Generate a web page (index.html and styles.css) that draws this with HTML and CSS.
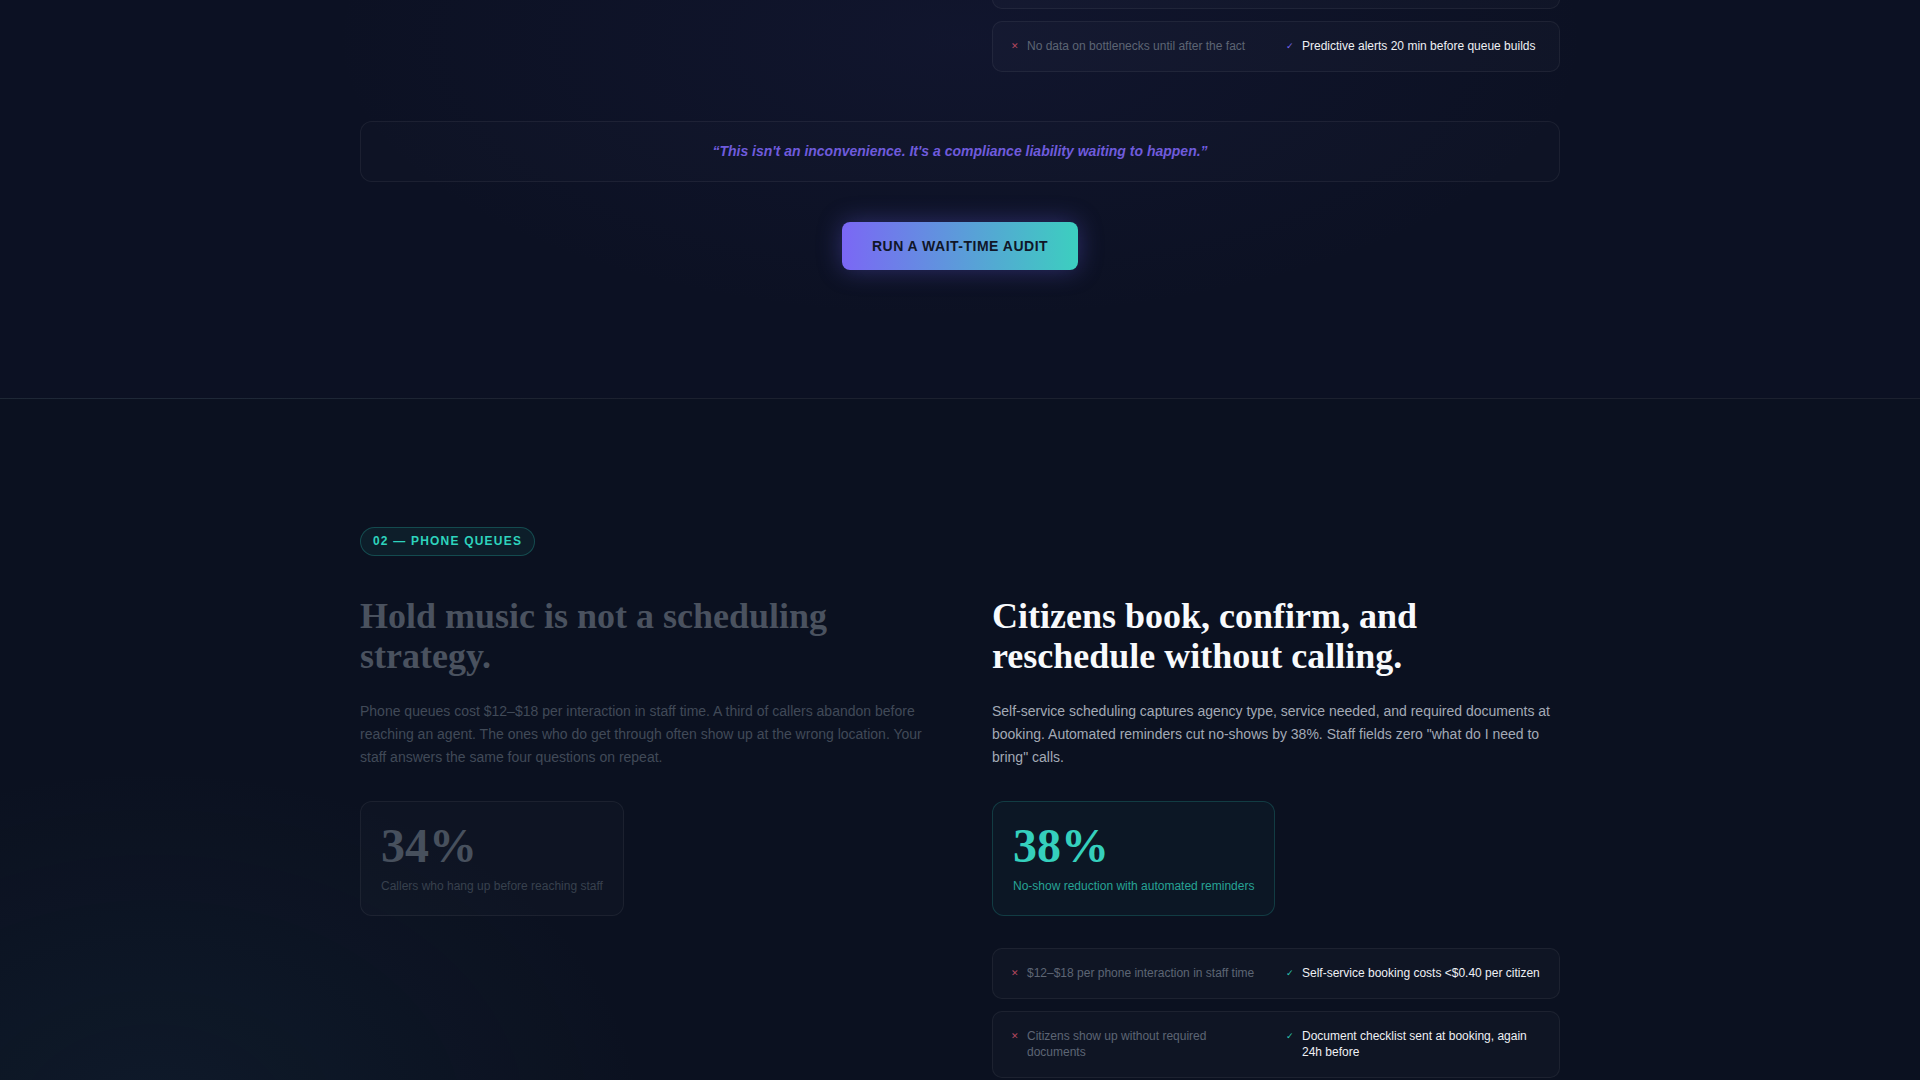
FILE: index.html
```html
<!DOCTYPE html>
<html lang="en">
<head>
    <meta charset="UTF-8">
    <meta name="viewport" content="width=device-width, initial-scale=1.0">
    <title>Appointment Scheduling for Government Agencies</title>
    <link rel="stylesheet" href="styles.css">
</head>
<body>
    <!-- 01: walk-in lines (tail of the section) -->
    <section class="section section-lines">
        <div class="container">
            <div class="split">
                <div class="col before"></div>
                <div class="col after">
                    <div class="compare-list compare-tail">
                        <div class="compare-row">
                            <div class="cell bad"><span class="mark">&#x2715;</span><span>Staff reassigned only after lines form</span></div>
                            <div class="cell good"><span class="mark">&#x2713;</span><span>Staffing matched to booked volume</span></div>
                        </div>
                        <div class="compare-row">
                            <div class="cell bad"><span class="mark">&#x2715;</span><span>No data on bottlenecks until after the fact</span></div>
                            <div class="cell good"><span class="mark">&#x2713;</span><span>Predictive alerts 20 min before queue builds</span></div>
                        </div>
                    </div>
                </div>
            </div>

            <div class="quote">&ldquo;This isn't an inconvenience. It's a compliance liability waiting to happen.&rdquo;</div>

            <div class="cta-wrap">
                <button class="cta-btn">RUN A WAIT-TIME AUDIT</button>
            </div>
        </div>
    </section>

    <!-- 02: phone queues -->
    <section class="section section-phone">
        <div class="container">
            <div class="tag">02 &mdash; PHONE QUEUES</div>

            <div class="split">
                <div class="col before">
                    <h2 class="headline">Hold music is not a scheduling strategy.</h2>
                    <p class="lead">Phone queues cost $12&ndash;$18 per interaction in staff time. A third of callers abandon before reaching an agent. The ones who do get through often show up at the wrong location. Your staff answers the same four questions on repeat.</p>
                    <div class="stat">
                        <div class="stat-num">34%</div>
                        <div class="stat-label">Callers who hang up before reaching staff</div>
                    </div>
                </div>
                <div class="col after">
                    <h2 class="headline">Citizens book, confirm, and reschedule without calling.</h2>
                    <p class="lead">Self-service scheduling captures agency type, service needed, and required documents at booking. Automated reminders cut no-shows by 38%. Staff fields zero "what do I need to bring" calls.</p>
                    <div class="stat">
                        <div class="stat-num">38%</div>
                        <div class="stat-label">No-show reduction with automated reminders</div>
                    </div>

                    <div class="compare-list">
                        <div class="compare-row">
                            <div class="cell bad"><span class="mark">&#x2715;</span><span>$12&ndash;$18 per phone interaction in staff time</span></div>
                            <div class="cell good"><span class="mark">&#x2713;</span><span>Self-service booking costs &lt;$0.40 per citizen</span></div>
                        </div>
                        <div class="compare-row">
                            <div class="cell bad"><span class="mark">&#x2715;</span><span>Citizens show up without required documents</span></div>
                            <div class="cell good"><span class="mark">&#x2713;</span><span>Document checklist sent at booking, again 24h before</span></div>
                        </div>
                    </div>
                </div>
            </div>
        </div>
    </section>
</body>
</html>
```

FILE: styles.css
```css
* {
    margin: 0;
    padding: 0;
    box-sizing: border-box;
}
body {
    font-family: "Liberation Sans", Arial, sans-serif;
    background: #0b1120;
    color: #e5e7eb;
    overflow: hidden;
}

.section {
    position: relative;
}
.section-lines {
    padding-bottom: 128px;
    background:
        radial-gradient(ellipse 900px 400px at 50% 10%, rgba(60, 60, 140, 0.10), transparent 70%),
        #0c1123;
}
.section-phone {
    padding-top: 128px;
    padding-bottom: 80px;
    border-top: 1px solid rgba(255, 255, 255, 0.07);
    background:
        radial-gradient(ellipse 700px 500px at 8% 95%, rgba(40, 90, 110, 0.12), transparent 70%),
        #0b1120;
}

.container {
    width: 1200px;
    margin: 0 auto;
}
.split {
    display: grid;
    grid-template-columns: 1fr 1fr;
    gap: 64px;
}
.col {
    display: flex;
    flex-direction: column;
    align-items: flex-start;
}

/* section label */
.tag {
    display: inline-block;
    padding: 5px 12px;
    border: 1px solid rgba(45, 212, 191, 0.25);
    border-radius: 999px;
    background: rgba(45, 212, 191, 0.07);
    color: #2ed3bd;
    font-size: 12px;
    line-height: 17px;
    font-weight: bold;
    letter-spacing: 1.2px;
    margin-bottom: 40px;
}

.headline {
    font-family: "Liberation Serif", "Times New Roman", serif;
    font-size: 36px;
    line-height: 1.12;
    font-weight: bold;
}
.lead {
    margin-top: 23px;
    font-size: 14px;
    line-height: 1.65;
}
.before .headline { color: #4a525f; }
.before .lead { color: #414a58; }
.after .headline { color: #f8fafc; }
.after .lead { color: #a3aab6; }

/* stat cards */
.stat {
    margin-top: 32px;
    padding: 20px;
    border-radius: 12px;
}
.stat-num {
    font-family: "Liberation Serif", "Times New Roman", serif;
    font-size: 48px;
    line-height: 1;
    font-weight: bold;
}
.stat-label {
    margin-top: 8px;
    font-size: 12px;
    line-height: 17px;
}
.before .stat {
    background: rgba(255, 255, 255, 0.015);
    border: 1px solid rgba(255, 255, 255, 0.06);
}
.before .stat-num { color: #47505d; }
.before .stat-label { color: #38414e; }
.after .stat {
    background: rgba(45, 212, 191, 0.035);
    border: 1px solid rgba(45, 212, 191, 0.2);
}
.after .stat-num { color: #35d0bd; }
.after .stat-label { color: #27a395; }

/* before / after rows */
.compare-list {
    width: 100%;
    margin-top: 32px;
    display: flex;
    flex-direction: column;
    gap: 12px;
}
.compare-tail {
    margin-top: -42px;
}
.compare-row {
    display: grid;
    grid-template-columns: 1fr 1fr;
    gap: 20px;
    padding: 16px 18px;
    background: rgba(255, 255, 255, 0.018);
    border: 1px solid rgba(255, 255, 255, 0.06);
    border-radius: 10px;
    font-size: 12px;
    line-height: 16.5px;
}
.cell {
    display: flex;
    gap: 8px;
}
.mark {
    flex: none;
    width: 8px;
    font-size: 9px;
    line-height: 17px;
}
.bad { color: #5d6574; }
.bad .mark { color: #b3475f; }
.good { color: #eef0f4; }
.section-lines .good .mark { color: #7a68f0; }
.section-phone .good .mark { color: #2ec9b4; }

/* pull quote */
.quote {
    margin-top: 49px;
    padding: 19px 24px;
    border: 1px solid rgba(255, 255, 255, 0.06);
    border-radius: 12px;
    background: rgba(255, 255, 255, 0.012);
    text-align: center;
    font-size: 14px;
    line-height: 21px;
    font-weight: bold;
    font-style: italic;
    color: #6f5bdc;
}

.cta-wrap {
    margin-top: 40px;
    display: flex;
    justify-content: center;
}
.cta-btn {
    padding: 15px 30px;
    border: none;
    border-radius: 8px;
    background: linear-gradient(90deg, #7b67f5, #3ccfbf);
    color: #101628;
    font-family: "Liberation Sans", Arial, sans-serif;
    font-size: 14px;
    line-height: 18px;
    font-weight: bold;
    letter-spacing: 0.5px;
    cursor: pointer;
    box-shadow: 0 0 24px rgba(110, 100, 240, 0.35);
}
```
